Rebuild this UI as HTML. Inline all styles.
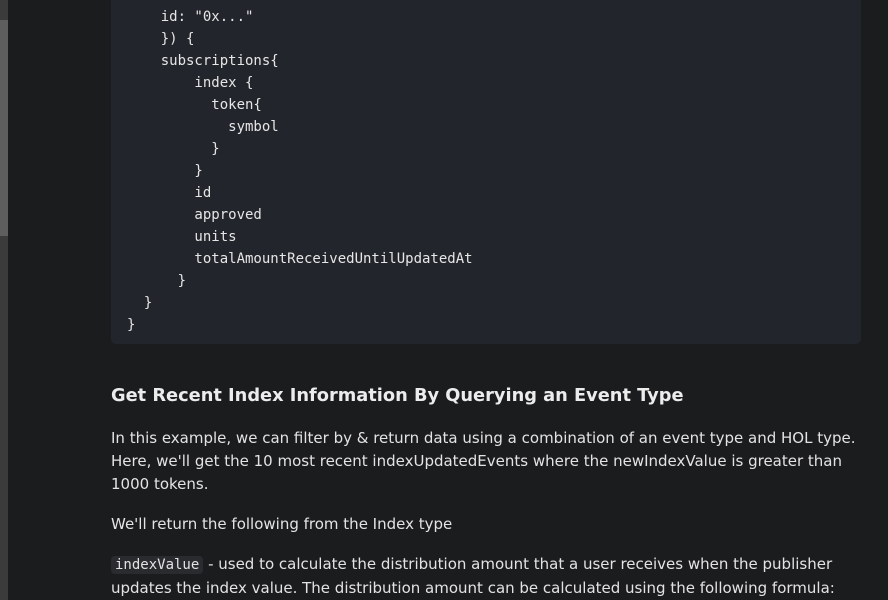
<!DOCTYPE html>
<html><head><meta charset="utf-8"><style>
html,body{margin:0;padding:0;width:888px;height:600px;overflow:hidden;background:#1b1c1e;}
.sb{position:absolute;left:0;top:0;width:8px;height:600px;background:#3b3b3b;}
.thumb{position:absolute;left:0;top:20px;width:8px;height:216px;background:#5e5e5e;}
.code{position:absolute;left:111px;top:-20px;width:750px;height:364px;background:#23252c;border-radius:5px;}
pre{margin:0;position:absolute;left:127px;top:6px;font-family:"DejaVu Sans Mono","Liberation Mono",monospace;font-size:14px;line-height:22px;color:#e6e6e6;}
.h{position:absolute;left:111px;top:384px;font-family:"DejaVu Sans","Liberation Sans",sans-serif;font-weight:bold;font-size:17.8px;line-height:24px;color:#ececec;margin:0;white-space:nowrap;}
.p{position:absolute;left:111px;font-family:"DejaVu Sans","Liberation Sans",sans-serif;font-size:15px;line-height:23px;color:#e3e3e3;margin:0;white-space:nowrap;}
code{font-family:"DejaVu Sans Mono","Liberation Mono",monospace;font-size:14px;background:#2a2b2f;border-radius:4px;padding:1px 4px;}
</style></head><body>
<div class="sb"><div class="thumb"></div></div>
<div class="code"></div>
<pre>    id: "0x..."
    }) {
    subscriptions{
        index {
          token{
            symbol
          }
        }
        id
        approved
        units
        totalAmountReceivedUntilUpdatedAt
      }
  }
}</pre>
<h2 class="h">Get Recent Index Information By Querying an Event Type</h2>
<p class="p" style="top:427px">In this example, we can filter by &amp; return data using a combination of an event type and HOL type.<br>Here, we'll get the 10 most recent indexUpdatedEvents where the newIndexValue is greater than<br>1000 tokens.</p>
<p class="p" style="top:513px">We'll return the following from the Index type</p>
<p class="p" style="top:553px"><code>indexValue</code> - used to calculate the distribution amount that a user receives when the publisher<br>updates the index value. The distribution amount can be calculated using the following formula:</p>
</body></html>
